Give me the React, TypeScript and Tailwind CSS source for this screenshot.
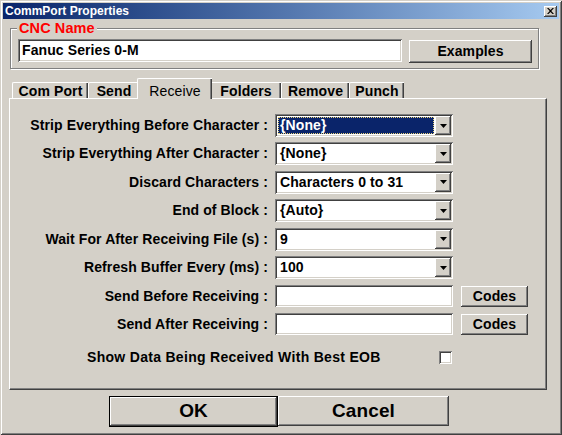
import React from "react";

const raised =
  "shadow-[inset_-1px_-1px_0_#404040,inset_1px_1px_0_#ffffff,inset_-2px_-2px_0_#808080,inset_2px_2px_0_#d4d0c8]";
const sunken =
  "shadow-[inset_1px_1px_0_#808080,inset_-1px_-1px_0_#ffffff,inset_2px_2px_0_#404040,inset_-2px_-2px_0_#d4d0c8]";

const tabs = [
  { label: "Com Port", w: "w-[76px]" },
  { label: "Send", w: "w-[51px]" },
  { label: "Receive", w: "w-[75px]", active: true },
  { label: "Folders", w: "w-[71px]" },
  { label: "Remove", w: "w-[68px]" },
  { label: "Punch", w: "w-[55px]" },
];

const rows = [
  { label: "Strip Everything Before Character :", value: "{None}", kind: "combo", focused: true },
  { label: "Strip Everything After Character :", value: "{None}", kind: "combo" },
  { label: "Discard Characters :", value: "Characters 0 to 31", kind: "combo" },
  { label: "End of Block :", value: "{Auto}", kind: "combo" },
  { label: "Wait For After Receiving File (s) :", value: "9", kind: "combo" },
  { label: "Refresh Buffer Every (ms) :", value: "100", kind: "combo" },
  { label: "Send Before Receiving :", value: "", kind: "text" },
  { label: "Send After Receiving :", value: "", kind: "text" },
];

const Combo = ({ value, focused }: { value: string; focused?: boolean }) => (
  <div className={`w-[178px] h-[23px] bg-white flex items-stretch p-[2px] ${sunken}`}>
    <div className="flex-1 flex items-center pl-[1px] pr-[1px] py-[1px]">
      {focused ? (
        <div className="w-full h-full bg-[#0a246a] text-white border border-dotted border-[#e8d27a] flex items-center pl-[1px]">
          {value}
        </div>
      ) : (
        <span className="pl-[2px]">{value}</span>
      )}
    </div>
    <div className={`w-[16px] bg-[#d4d0c8] flex items-center justify-center ${raised}`}>
      <svg width="7" height="4" viewBox="0 0 7 4">
        <path d="M0 0h7L3.5 4z" fill="#000" />
      </svg>
    </div>
  </div>
);

export default function App() {
  return (
    <div className="w-[562px] h-[435px] bg-[#d4d0c8] overflow-hidden flex flex-col font-['Liberation_Sans',Arial,sans-serif] text-[14px] tracking-[0.1px] font-bold text-black shadow-[inset_1px_1px_0_#d4d0c8,inset_-1px_-1px_0_#404040,inset_2px_2px_0_#ffffff,inset_-2px_-2px_0_#808080]">
      {/* Title bar */}
      <div className="mx-[3px] mt-[3px] h-[16px] bg-gradient-to-r from-[#0a246a] to-[#a6caf0] flex items-center justify-between pl-[2px] pr-[2px]">
        <span className="text-white text-[12px] leading-none tracking-normal">CommPort Properties</span>
        <div className={`w-[13px] h-[11px] bg-[#d4d0c8] flex items-center justify-center ${raised}`}>
          <svg width="7" height="6" viewBox="0 0 7 6">
            <path d="M0 0h1.5L3.5 2 5.5 0H7L4.3 3 7 6H5.5L3.5 4 1.5 6H0l2.7-3z" fill="#000" />
          </svg>
        </div>
      </div>

      {/* CNC Name group */}
      <div className="relative ml-[10px] mt-[9px] w-[529px] h-[41px] border border-[#808080] shadow-[inset_1px_1px_0_#ffffff,1px_1px_0_#ffffff]">
        <span className="absolute left-[6px] -top-[8px] px-[2px] bg-[#d4d0c8] text-[#ff0000] text-[14.5px] leading-[15px]">
          CNC Name
        </span>
        <div className="flex items-start pt-[10px] pl-[7px]">
          <div className={`w-[384px] h-[23px] bg-white flex items-center pl-[4px] ${sunken}`}>
            Fanuc Series 0-M
          </div>
          <button className={`ml-[7px] mt-[1px] w-[123px] h-[23px] bg-[#d4d0c8] flex items-center justify-center ${raised}`}>
            Examples
          </button>
        </div>
      </div>

      {/* Tabs */}
      <div className="ml-[12px] mt-[9px] h-[20px] flex items-end">
        {tabs.map((t) =>
          t.active ? (
            <div
              key={t.label}
              className={`relative z-10 -mx-[2px] -mb-px ${t.w} h-[21px] bg-[#d4d0c8] border-l border-t border-white rounded-tl-[2px] shadow-[inset_-1px_0_0_#404040,inset_-2px_0_0_#808080] flex items-start justify-center pt-[2px] font-normal`}
            >
              {t.label}
            </div>
          ) : (
            <div
              key={t.label}
              className={`${t.w} h-[16px] bg-[#d4d0c8] border-l border-t border-white rounded-tl-[2px] shadow-[inset_-1px_0_0_#404040,inset_-2px_0_0_#808080] flex items-center justify-center leading-none pt-[1px]`}
            >
              {t.label}
            </div>
          )
        )}
      </div>

      {/* Tab panel */}
      <div className="ml-[9px] w-[538px] h-[292px] border-l border-t border-white border-r border-b border-r-[#404040] border-b-[#404040] shadow-[inset_-1px_-1px_0_#808080] pt-[15px]">
        <div className="flex flex-col gap-[5.43px]">
          {rows.map((r) => (
            <div key={r.label} className="flex items-center h-[23px]">
              <div className="w-[258px] text-right whitespace-nowrap">{r.label}</div>
              <div className="ml-[7px]">
                {r.kind === "combo" ? (
                  <Combo value={r.value} focused={r.focused} />
                ) : (
                  <div className={`w-[178px] h-[22px] bg-white ${sunken}`} />
                )}
              </div>
              {r.kind === "text" && (
                <button className={`ml-[8px] w-[67px] h-[21px] bg-[#d4d0c8] flex items-center justify-center ${raised}`}>
                  Codes
                </button>
              )}
            </div>
          ))}
        </div>
        <div className="flex items-center mt-[15px] h-[13px]">
          <span className="ml-[77px] w-[352px] whitespace-nowrap tracking-[0.3px]">Show Data Being Received With Best EOB</span>
          <div className={`w-[13px] h-[13px] bg-white ${sunken}`} />
        </div>
      </div>

      {/* Buttons */}
      <div className="flex mt-[6px] ml-[109px]">
        <button className="w-[169px] h-[31px] border border-black bg-[#d4d0c8] text-[19px] flex">
          <span className={`flex-1 flex items-center justify-center ${raised}`}>OK</span>
        </button>
        <button className={`w-[171px] h-[30px] bg-[#d4d0c8] text-[19px] flex items-center justify-center ${raised}`}>
          Cancel
        </button>
      </div>
    </div>
  );
}
